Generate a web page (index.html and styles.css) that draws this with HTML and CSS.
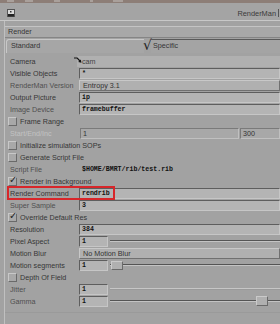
FILE: index.html
```html
<!DOCTYPE html>
<html>
<head>
<meta charset="utf-8">
<link rel="stylesheet" href="styles.css">
</head>
<body>
<div class="topstrip">
  <span class="tsb b1"></span><span class="tsb b2"></span><span class="tsb b3"></span><span class="tsb b4"></span><span class="tsb b5"></span>
</div>
<div class="toolbar">
  <svg class="tb-icon" width="8" height="8" viewBox="0 0 8 8"><rect x="0.5" y="0.5" width="7" height="7" fill="#d8d8d8" stroke="#555"/><rect x="1" y="5" width="6" height="2.5" fill="#222"/><rect x="3" y="2" width="1.5" height="1.5" fill="#333"/></svg>
  <span class="tb-title">RenderMan</span>
  <span class="tb-vline"></span>
</div>
<div class="sep"></div>
<div class="frame">
  <div class="renderbar">Render</div>
  <div class="tabs">
    <div class="tab std">Standard</div>
    <span class="tabcheck">√</span>
    <div class="tab spec">Specific</div>
  </div>
  <div class="panel">
    <div class="row">
      <span class="label">Camera</span>
      <span class="pick"><svg width="8" height="6" viewBox="0 0 8 6"><path d="M0 1H3.2L6 4" fill="none" stroke="#111" stroke-width="1.2"/><path d="M7.5 5.8L4.2 5L6.8 2.6Z" fill="#111"/></svg></span>
      <div class="field flat wide cam">cam</div>
    </div>
    <div class="row"><span class="label">Visible Objects</span><div class="field mono">*</div></div>
    <div class="row"><span class="label dim">RenderMan Version</span><div class="field menu">Entropy 3.1</div></div>
    <div class="row"><span class="label">Output Picture</span><div class="field mono">ip</div></div>
    <div class="row"><span class="label dim">Image Device</span><div class="field mono">framebuffer</div></div>
    <div class="row check"><span class="cb"></span><span class="label">Frame Range</span></div>
    <div class="row"><span class="label disabled">Start/End/Inc</span><div class="pair"><div class="field dis">1</div><div class="field dis end">300</div></div></div>
    <div class="row check"><span class="cb"></span><span class="label">Initialize simulation SOPs</span></div>
    <div class="row check"><span class="cb"></span><span class="label">Generate Script File</span></div>
    <div class="row"><span class="label dim">Script File</span><div class="field mono flat2">$HOME/BMRT/rib/test.rib</div></div>
    <div class="row check"><span class="cb on"></span><span class="label">Render in Background</span></div>
    <div class="row"><span class="label">Render Command</span><div class="field mono">rendrib</div></div>
    <div class="row"><span class="label dim">Super Sample</span><div class="field mono">3</div></div>
    <div class="row check"><span class="cb on"></span><span class="label">Override Default Res</span></div>
    <div class="row"><span class="label">Resolution</span><div class="field mono">384</div></div>
    <div class="row"><span class="label">Pixel Aspect</span><div class="slide"><div class="field mono short">1</div><div class="track"></div></div></div>
    <div class="row"><span class="label">Motion Blur</span><div class="field menu">No Motion Blur</div></div>
    <div class="row"><span class="label">Motion segments</span><div class="slide"><div class="field mono short">1</div><div class="track"><span class="handle h-left"></span></div></div></div>
    <div class="row check"><span class="cb"></span><span class="label">Depth Of Field</span></div>
    <div class="row"><span class="label dim">Jitter</span><div class="slide"><div class="field mono short">1</div><div class="track light"></div></div></div>
    <div class="row"><span class="label dim">Gamma</span><div class="slide"><div class="field mono short">1</div><div class="track"><span class="handle h-gamma"></span></div></div></div>
    <div class="bottom"></div>
  </div>
</div>
<div class="redbox"></div>
</body>
</html>
```
FILE: styles.css
```css
* { box-sizing: border-box; }
html, body { margin: 0; padding: 0; }
body {
  width: 280px;
  height: 324px;
  overflow: hidden;
  position: relative;
  background: #a2a2a2;
  font-family: "Liberation Sans", Arial, sans-serif;
  font-size: 7.2px;
  color: #333;
}
.topstrip {
  height: 3px;
  background: #8d7e77;
  position: relative;
  display: flex;
}
.tsb { height: 2px; background: #a9a09b; display: block; margin-top: 0; }
.b1 { width: 7px; margin-left: 7px; }
.b2 { width: 8px; margin-left: 11px; }
.b3 { width: 6px; margin-left: 21px; }
.b4 { width: 3px; margin-left: 30px; }
.b5 { width: 10px; margin-left: 20px; }
.toolbar {
  height: 17px;
  display: flex;
  align-items: center;
  padding-left: 7px;
  background: #a4a4a4;
}
.tb-icon { display: block; margin-top: 2px; }
.tb-title {
  margin-left: auto;
  font-size: 7.4px;
  color: #3a3a3a;
  margin-top: 3px;
}
.tb-vline {
  width: 1px;
  height: 8px;
  background: #555;
  margin: 3px 1px 0 2px;
}
.sep { height: 1px; background: #c8c8c8; }
.frame {
  margin-left: 4px;
  border-left: 1px solid #c0c0c0;
  padding-top: 5px;
  height: 303px;
}
.renderbar {
  height: 12px;
  border-top: 1px solid #c4c4c4;
  border-bottom: 1px solid #858585;
  background: #a8a8a8;
  padding-left: 3px;
  line-height: 10px;
  color: #353535;
}
.tabs {
  display: flex;
  height: 14px;
  margin-top: 1px;
}
.tab { line-height: 12px; color: #353535; }
.tab.std {
  width: 138px;
  margin-left: 1px;
  border-top: 1px solid #c8c8c8;
  border-left: 1px solid #c8c8c8;
  border-top-left-radius: 3px;
  padding-left: 4px;
  background: #a6a6a6;
}
.tabcheck {
  width: 7px;
  font-size: 14px;
  line-height: 13px;
  color: #222;
  font-family: "DejaVu Sans", sans-serif;
  overflow: visible;
  margin-left: -1px;
  margin-right: 1px;
}
.tab.spec {
  flex: 1;
  border-top: 1px solid #5a5a5a;
  padding-left: 2px;
  background: #a4a4a4;
}
.panel {
  padding-top: 2px;
}
.row {
  height: 12px;
  display: grid;
  grid-template-columns: 69px 1fr;
  align-items: center;
  padding-left: 5px;
  position: relative;
}
.label {
  white-space: nowrap;
  color: #363636;
}
.label.dim { color: #4f4f4f; }
.label.disabled { color: #c2c2c2; }
.row.check {
  display: flex;
  padding-left: 3px;
  gap: 3px;
}
.cb {
  width: 9px;
  height: 9px;
  border: 1px solid;
  border-color: #c8c8c8 #6a6a6a #6a6a6a #c8c8c8;
  background: #a8a8a8;
  position: relative;
  display: block;
}
.cb.on::after {
  content: "✓";
  position: absolute;
  left: 0px;
  top: -4px;
  font-family: "DejaVu Sans", sans-serif;
  font-size: 10px;
  font-weight: bold;
  color: #222;
}
.field {
  height: 11px;
  line-height: 9px;
  padding-left: 2px;
  border: 1px solid;
  border-color: #5e5e5e #c6c6c6 #c6c6c6 #5e5e5e;
  background: #b4b4b4;
  white-space: nowrap;
  overflow: hidden;
  color: #111;
}
.field.mono {
  font-family: "Liberation Mono", "Courier New", monospace;
  font-weight: bold;
  font-size: 6.6px;
}
.field.flat {
  border-color: #b0b0b0;
  background: #b0b0b0;
  color: #444;
  padding-left: 4px;
}
.field.cam { margin-left: -2px; }
.pick {
  position: absolute;
  left: 69px;
  top: 2px;
  display: block;
  line-height: 0;
}
.field.menu {
  border-color: #c8c8c8 #707070 #707070 #c8c8c8;
  background: #b0b0b0;
  color: #333;
  padding-left: 3px;
  font-size: 7.2px;
}
.field.flat2 {
  border-color: #a2a2a2;
  background: #a2a2a2;
}
.field.dis {
  background: #a8a8a8;
  border-color: #7a7a7a #c0c0c0 #c0c0c0 #7a7a7a;
  color: #333;
  font-size: 7.2px;
}
.pair { display: grid; grid-template-columns: 159px 1fr; gap: 1px; margin-left: 1px; }
.slide { display: flex; align-items: center; }
.field.short { width: 29px; }
.track {
  flex: 1;
  height: 2px;
  margin-left: 2px;
  border-top: 1px solid #555;
  border-bottom: 1px solid #c4c4c4;
  position: relative;
}
.track.light { border-top-color: #c6c6c6; border-bottom-color: #9a9a9a; }
.handle {
  position: absolute;
  width: 12px;
  height: 10px;
  top: -5px;
  border: 1px solid;
  border-color: #cacaca #6a6a6a #6a6a6a #cacaca;
  background: #b0b0b0;
}
.h-left { left: 1px; height: 9px; top: -4px; }
.h-gamma { left: 146px; }
.bottom {
  margin-top: 5px;
  height: 1px;
  background: #9a9a9a;
}
.redbox {
  position: absolute;
  left: 7px;
  top: 186px;
  width: 108px;
  height: 14px;
  border: 2px solid #d8262a;
}
```
